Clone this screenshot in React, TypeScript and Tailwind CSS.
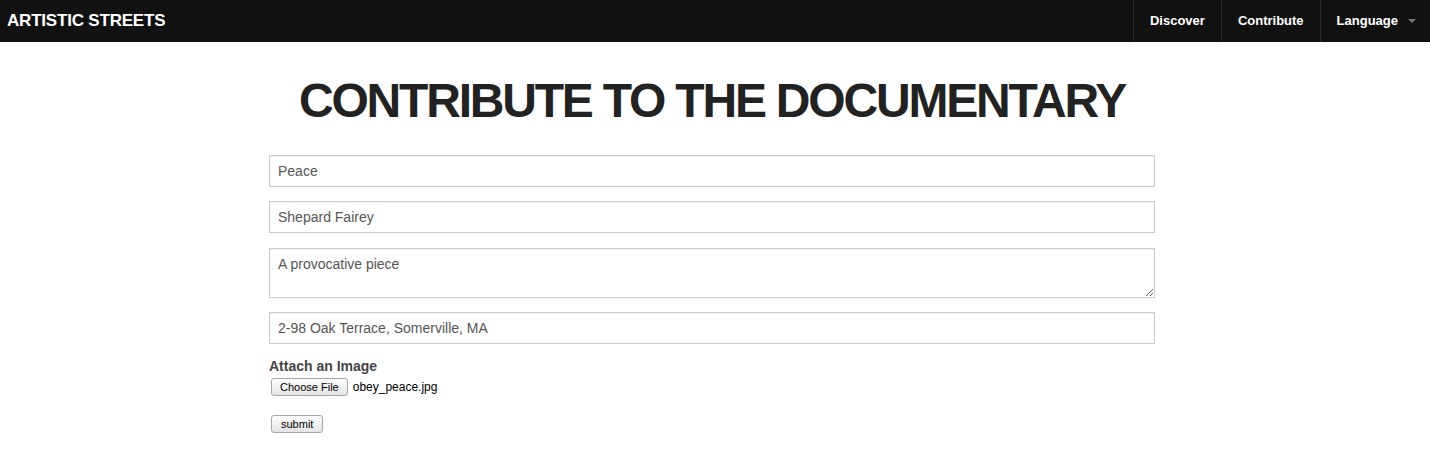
import React from "react";

export default function App() {
  const inputCls =
    "w-full h-[32px] border border-[#cccccc] bg-white px-[8px] text-[14px] text-[#555555] outline-none shadow-[inset_0_1px_1px_rgba(0,0,0,0.075)]";
  const btnCls =
    "h-[18px] rounded-[3px] border border-[#a6a6a6] bg-gradient-to-b from-[#fefefe] to-[#e4e4e4] text-[11px] leading-[16px] text-black";
  return (
    <div className="min-h-[462px] bg-white overflow-hidden" style={{ fontFamily: '"Liberation Sans", Arial, sans-serif' }}>
      <nav className="h-[42px] bg-[#111111] flex items-stretch justify-between">
        <div className="pl-[7px] flex items-center text-white font-bold text-[17px] tracking-[-0.2px]">ARTISTIC STREETS</div>
        <div className="flex items-stretch text-white font-bold text-[13px]">
          <div className="flex items-center px-[16px] border-l border-[#2a2a2a]">Discover</div>
          <div className="flex items-center px-[16px] border-l border-[#2a2a2a]">Contribute</div>
          <div className="flex items-center pl-[16px] pr-[14px] border-l border-[#2a2a2a]">
            Language
            <span className="ml-[10px] w-0 h-0 border-l-[4px] border-r-[4px] border-t-[4px] border-l-transparent border-r-transparent border-t-[#777777]" />
          </div>
        </div>
      </nav>
      <div className="ml-[269px] w-[886px]">
        <h1 className="mt-[31px] text-center whitespace-nowrap text-[48px] leading-[55px] font-bold text-[#222222] tracking-[-2.2px]">CONTRIBUTE TO THE DOCUMENTARY</h1>
        <form className="mt-[27px] flex flex-col">
          <input className={inputCls} defaultValue="Peace" />
          <input className={inputCls + " mt-[14px]"} defaultValue="Shepard Fairey" />
          <textarea
            className="mt-[15px] w-full h-[50px] border border-[#cccccc] bg-white px-[8px] py-[5px] text-[14px] leading-[20px] text-[#555555] outline-none shadow-[inset_0_1px_1px_rgba(0,0,0,0.075)] block"
            defaultValue="A provocative piece"
          />
          <input className={inputCls + " mt-[14px]"} defaultValue="2-98 Oak Terrace, Somerville, MA" />
          <label className="mt-[13px] text-[14px] leading-[18px] font-bold text-[#444444]">Attach an Image</label>
          <div className="mt-[3px] ml-[2px] flex items-center gap-[5px]">
            <button type="button" className={btnCls + " px-[8px]"}>Choose File</button>
            <span className="text-[12px] text-black">obey_peace.jpg</span>
          </div>
          <div className="mt-[15px] ml-[2px]">
            <button type="button" className={btnCls + " px-[9px]"}>submit</button>
          </div>
        </form>
      </div>
    </div>
  );
}
